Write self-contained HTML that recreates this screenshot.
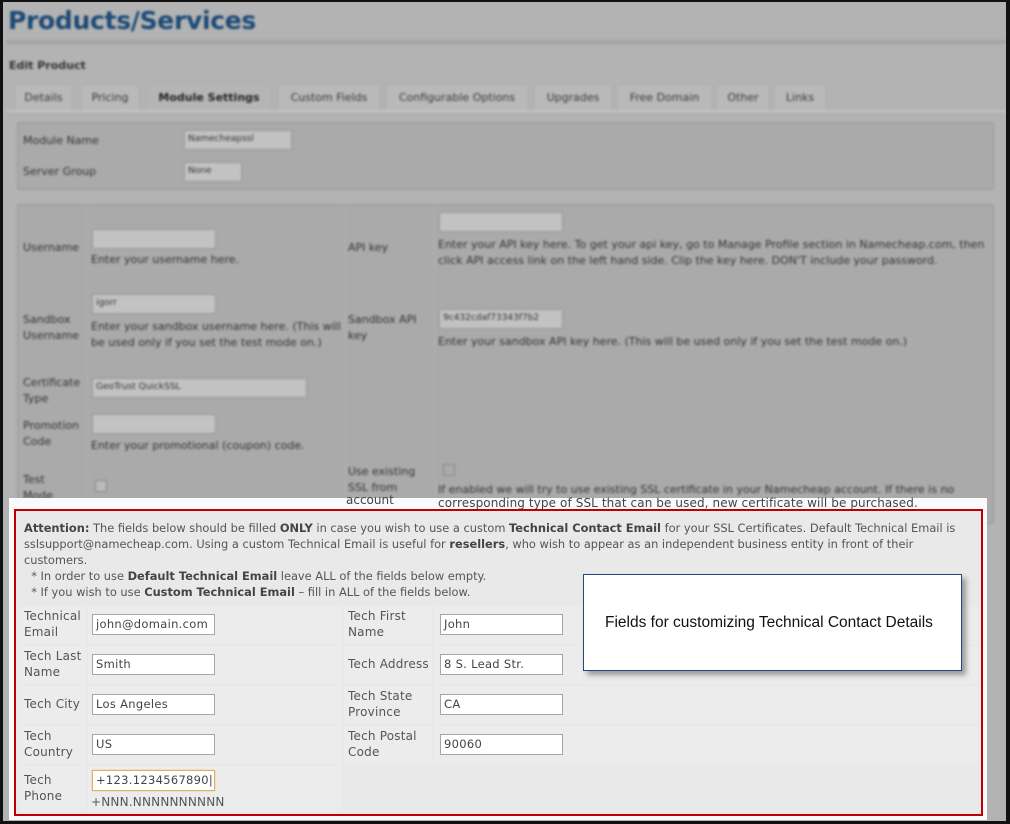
<!DOCTYPE html>
<html><head><style>
*{margin:0;padding:0;box-sizing:border-box}
body{width:1010px;height:824px;background:#111;position:relative;overflow:hidden;font-family:"DejaVu Sans",Verdana,sans-serif}
.a{position:absolute}
#pg{left:3px;top:2px;width:1003px;height:819px;background:#b3b3b3;overflow:hidden}
#top{left:0;top:0;width:1003px;height:520px;filter:blur(1.1px);color:#333;font-size:11px}
.tab{top:84px;height:24px;background:#b9b9b9;font-size:11px;line-height:24px;text-align:center;color:#3a3a3a}
.in{background:#c2c2c2;border:1px solid #9a9a9a;height:20px}
.t{font-size:11px;color:#333;line-height:16px}
#bot{left:6px;top:496px;width:978px;height:322px;background:#fafafa}
#red{left:11px;top:507px;width:969px;height:307px;border:2px solid #c00000;background:#e9e9e9}
.lbl{font-size:12px;color:#555;line-height:16px;letter-spacing:.2px}
.cell{background:#ececec}
.inp{background:#fff;border:1px solid #a6a6a6;height:21px;width:123px;font-size:11.5px;color:#444;padding:2px 3px;line-height:15px;letter-spacing:.3px;white-space:nowrap;overflow:hidden}
.att{font-size:11.4px;color:#555;line-height:16px;letter-spacing:0}
.att b{color:#444}
</style></head><body>
<div id="pg" class="a">
<div id="top" class="a">
 <div class="a" style="left:5px;top:4px;font-size:25px;font-weight:bold;color:#1c4a76;letter-spacing:-.3px">Products/Services</div>
 <div class="a" style="left:3px;top:38px;width:1000px;height:4px;background:#a4a4a4"></div>
 <div class="a" style="left:6px;top:57px;font-weight:bold;font-size:11px;color:#333">Edit Product</div>
 <div class="a" style="left:3px;top:108px;width:1000px;height:2px;background:#c4c4c4"></div>
 <div class="a tab" style="left:13px;width:55px">Details</div>
 <div class="a tab" style="left:79px;width:56px">Pricing</div>
 <div class="a tab" style="left:145px;width:122px;font-weight:bold;color:#222;background:#b5b5b5">Module Settings</div>
 <div class="a tab" style="left:276px;width:100px">Custom Fields</div>
 <div class="a tab" style="left:384px;width:140px">Configurable Options</div>
 <div class="a tab" style="left:532px;width:76px">Upgrades</div>
 <div class="a tab" style="left:615px;width:93px">Free Domain</div>
 <div class="a tab" style="left:715px;width:50px">Other</div>
 <div class="a tab" style="left:772px;width:50px">Links</div>
 <div class="a" style="left:14px;top:120px;width:977px;height:68px;background:#aaaaaa;border:2px solid #a2a2a2"></div>
 <div class="a t" style="left:20px;top:131px">Module Name</div>
 <div class="a in" style="left:181px;top:128px;width:108px;font-size:9px;padding:3px">Namecheapssl</div>
 <div class="a t" style="left:20px;top:162px">Server Group</div>
 <div class="a in" style="left:181px;top:160px;width:58px;font-size:9px;padding:3px">None</div>
 <div class="a" style="left:14px;top:202px;width:977px;height:320px;background:#aaaaaa;border:2px solid #a2a2a2"></div>
 <div class="a" style="left:84px;top:204px;width:1px;height:316px;background:#b0b0b0"></div>
 <div class="a" style="left:341px;top:204px;width:1px;height:316px;background:#b0b0b0"></div>
 <div class="a" style="left:431px;top:204px;width:1px;height:316px;background:#b0b0b0"></div>
 <div class="a t" style="left:20px;top:238px">Username</div>
 <div class="a in" style="left:89px;top:227px;width:124px"></div>
 <div class="a t" style="left:88px;top:250px">Enter your username here.</div>
 <div class="a t" style="left:345px;top:238px">API key</div>
 <div class="a in" style="left:436px;top:210px;width:124px"></div>
 <div class="a t" style="left:435px;top:235px;width:550px">Enter your API key here. To get your api key, go to Manage Profile section in Namecheap.com, then click API access link on the left hand side. Clip the key here. DON'T include your password.</div>
 <div class="a t" style="left:20px;top:310px;width:60px">Sandbox Username</div>
 <div class="a in" style="left:89px;top:292px;width:124px;font-size:9px;padding:3px">igorr</div>
 <div class="a t" style="left:88px;top:317px;width:250px">Enter your sandbox username here. (This will be used only if you set the test mode on.)</div>
 <div class="a t" style="left:345px;top:310px;width:80px">Sandbox API key</div>
 <div class="a in" style="left:436px;top:307px;width:124px;font-size:9px;padding:3px">9c432cdaf73343f7b2</div>
 <div class="a t" style="left:435px;top:332px">Enter your sandbox API key here. (This will be used only if you set the test mode on.)</div>
 <div class="a t" style="left:20px;top:373px;width:60px">Certificate Type</div>
 <div class="a in" style="left:89px;top:376px;width:215px;font-size:9px;padding:3px">GeoTrust QuickSSL</div>
 <div class="a t" style="left:20px;top:416px;width:60px">Promotion Code</div>
 <div class="a in" style="left:89px;top:412px;width:124px"></div>
 <div class="a t" style="left:88px;top:436px">Enter your promotional (coupon) code.</div>
 <div class="a t" style="left:20px;top:470px;width:50px">Test Mode</div>
 <div class="a" style="left:92px;top:478px;width:12px;height:12px;border:1px solid #888;background:#bbb"></div>
 <div class="a t" style="left:345px;top:462px;width:80px">Use existing SSL from</div>
 <div class="a" style="left:440px;top:462px;width:12px;height:12px;border:1px solid #888"></div>
 <div class="a t" style="left:435px;top:480px;width:560px">If enabled we will try to use existing SSL certificate in your Namecheap account. If there is no</div>
</div>
<div id="bot" class="a"></div>
<div class="a t" style="left:343px;top:490px;font-size:12px;color:#444">account</div>
<div class="a t" style="left:435px;top:493px;font-size:12px;color:#444;letter-spacing:.1px">corresponding type of SSL that can be used, new certificate will be purchased.</div>
<div id="red" class="a"></div>
<div class="a att" style="left:21px;top:518px;width:955px">
<b>Attention:</b> The fields below should be filled <b>ONLY</b> in case you wish to use a custom <b>Technical Contact Email</b> for your SSL Certificates. Default Technical Email is sslsupport@namecheap.com. Using a custom Technical Email is useful for <b>resellers</b>, who wish to appear as an independent business entity in front of their customers.<br>
&nbsp;&nbsp;* In order to use <b>Default Technical Email</b> leave ALL of the fields below empty.<br>
&nbsp;&nbsp;* If you wish to use <b>Custom Technical Email</b> – fill in ALL of the fields below.</div>
<div class="a cell" style="left:17px;top:604px;width:66px;height:38px"></div>
<div class="a cell" style="left:85px;top:604px;width:254px;height:38px"></div>
<div class="a cell" style="left:341px;top:604px;width:88px;height:38px"></div>
<div class="a cell" style="left:431px;top:604px;width:544px;height:38px"></div>
<div class="a cell" style="left:17px;top:644px;width:66px;height:38px"></div>
<div class="a cell" style="left:85px;top:644px;width:254px;height:38px"></div>
<div class="a cell" style="left:341px;top:644px;width:88px;height:38px"></div>
<div class="a cell" style="left:431px;top:644px;width:544px;height:38px"></div>
<div class="a cell" style="left:17px;top:684px;width:66px;height:38px"></div>
<div class="a cell" style="left:85px;top:684px;width:254px;height:38px"></div>
<div class="a cell" style="left:341px;top:684px;width:88px;height:38px"></div>
<div class="a cell" style="left:431px;top:684px;width:544px;height:38px"></div>
<div class="a cell" style="left:17px;top:724px;width:66px;height:38px"></div>
<div class="a cell" style="left:85px;top:724px;width:254px;height:38px"></div>
<div class="a cell" style="left:341px;top:724px;width:88px;height:38px"></div>
<div class="a cell" style="left:431px;top:724px;width:544px;height:38px"></div>
<div class="a cell" style="left:17px;top:764px;width:66px;height:46px"></div>
<div class="a cell" style="left:85px;top:764px;width:254px;height:46px"></div>
<div class="a lbl" style="left:21px;top:606px">Technical<br>Email</div>
<div class="a inp" style="left:89px;top:612px">john@domain.com</div>
<div class="a lbl" style="left:345px;top:606px">Tech First<br>Name</div>
<div class="a inp" style="left:437px;top:612px">John</div>
<div class="a lbl" style="left:21px;top:646px">Tech Last<br>Name</div>
<div class="a inp" style="left:89px;top:652px">Smith</div>
<div class="a lbl" style="left:345px;top:654px">Tech Address</div>
<div class="a inp" style="left:437px;top:652px">8 S. Lead Str.</div>
<div class="a lbl" style="left:21px;top:694px">Tech City</div>
<div class="a inp" style="left:89px;top:692px">Los Angeles</div>
<div class="a lbl" style="left:345px;top:686px">Tech State<br>Province</div>
<div class="a inp" style="left:437px;top:692px">CA</div>
<div class="a lbl" style="left:21px;top:726px">Tech<br>Country</div>
<div class="a inp" style="left:89px;top:732px">US</div>
<div class="a lbl" style="left:345px;top:726px">Tech Postal<br>Code</div>
<div class="a inp" style="left:437px;top:732px">90060</div>
<div class="a lbl" style="left:21px;top:770px">Tech<br>Phone</div>
<div class="a inp" style="left:89px;top:768px;border:1px solid #e0b060;box-shadow:0 0 1px #e0b060">+123.1234567890|</div>
<div class="a lbl" style="left:88px;top:792px">+NNN.NNNNNNNNNN</div>
<div class="a" style="left:580px;top:572px;width:379px;height:97px;background:#fff;border:1px solid #1f4a80;box-shadow:4px 4px 5px rgba(0,0,0,.35)"></div>
<div class="a" style="left:602px;top:612px;font-family:'Liberation Sans',Arial,sans-serif;font-size:15.5px;color:#111">Fields for customizing Technical Contact Details</div>
</div>
</body></html>
